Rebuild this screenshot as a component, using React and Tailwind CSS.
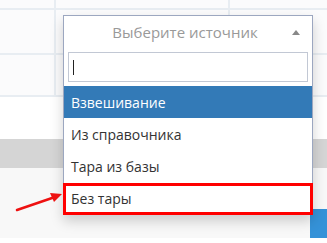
import React from 'react';

const options = ['Взвешивание', 'Из справочника', 'Тара из базы', 'Без тары'];

const GridRow = ({ h, line = true }) => (
  <div className={`flex ${line ? 'border-b-2 border-[#e8edf2]' : ''}`} style={{ height: h }}>
    <div className="w-[56px] border-r-2 border-[#e8edf2] bg-[#fbfbfc]" />
    <div className="w-[174px] border-r-2 border-[#e8edf2] bg-[#fbfbfc]" />
    <div className="flex-1 bg-[#fbfbfc]" />
  </div>
);

const App = () => {
  return (
    <div className="relative w-[327px] h-[243px] overflow-hidden bg-white font-['Open_Sans',sans-serif]">
      {/* Background table */}
      <GridRow h={10} />
      <GridRow h={45} />
      <GridRow h={42} />
      <div className="h-[42px] bg-white" />
      <div className="h-[29px] bg-[#d5d5d5]" />
      <div className="h-[41px] bg-[#f8f8f8]" />
      <div className="flex h-[29px] bg-[#f8f8f8]">
        <div className="flex-1" />
        <div className="w-[17px] bg-[#3592d8]" />
      </div>

      {/* Select dropdown */}
      <div className="absolute left-[63px] top-[15px] w-[250px] border border-[#9ca7c0] bg-white shadow-[0_6px_12px_rgba(0,0,0,0.18)]">
        <div className="flex h-[32px] items-center pl-[14px] pr-[12px]">
          <span className="flex-1 text-center text-[15px] text-[#999]">Выберите источник</span>
          <span className="h-0 w-0 border-x-[4px] border-b-[5px] border-x-transparent border-b-[#888]" />
        </div>
        <div className="px-[4px] pt-[4px] pb-[4px]">
          <div className="flex h-[30px] items-center border border-[#c2c8d4] pl-[4px]">
            <span className="h-[15px] w-[1px] bg-[#222]" />
          </div>
        </div>
        <ul>
          {options.map((opt, idx) => (
            <li
              key={opt}
              className={`flex h-[32px] items-center pl-[7px] text-[14px] ${
                idx === 0 ? 'bg-[#337ab7] text-white' : 'text-[#333]'
              }`}
            >
              {opt}
            </li>
          ))}
        </ul>
      </div>

      {/* Highlight box */}
      <div className="absolute left-[63px] top-[183px] h-[32px] w-[250px] border-[3px] border-[#ff0000]" />

      {/* Annotation arrow */}
      <svg className="absolute left-0 top-0" width="327" height="243">
        <line x1="17" y1="210" x2="55" y2="197" stroke="#ee1111" strokeWidth="2.5" strokeLinecap="round" />
        <polygon points="62,194 50,193 54,202" fill="#ee1111" />
      </svg>
    </div>
  );
};

export default App;
